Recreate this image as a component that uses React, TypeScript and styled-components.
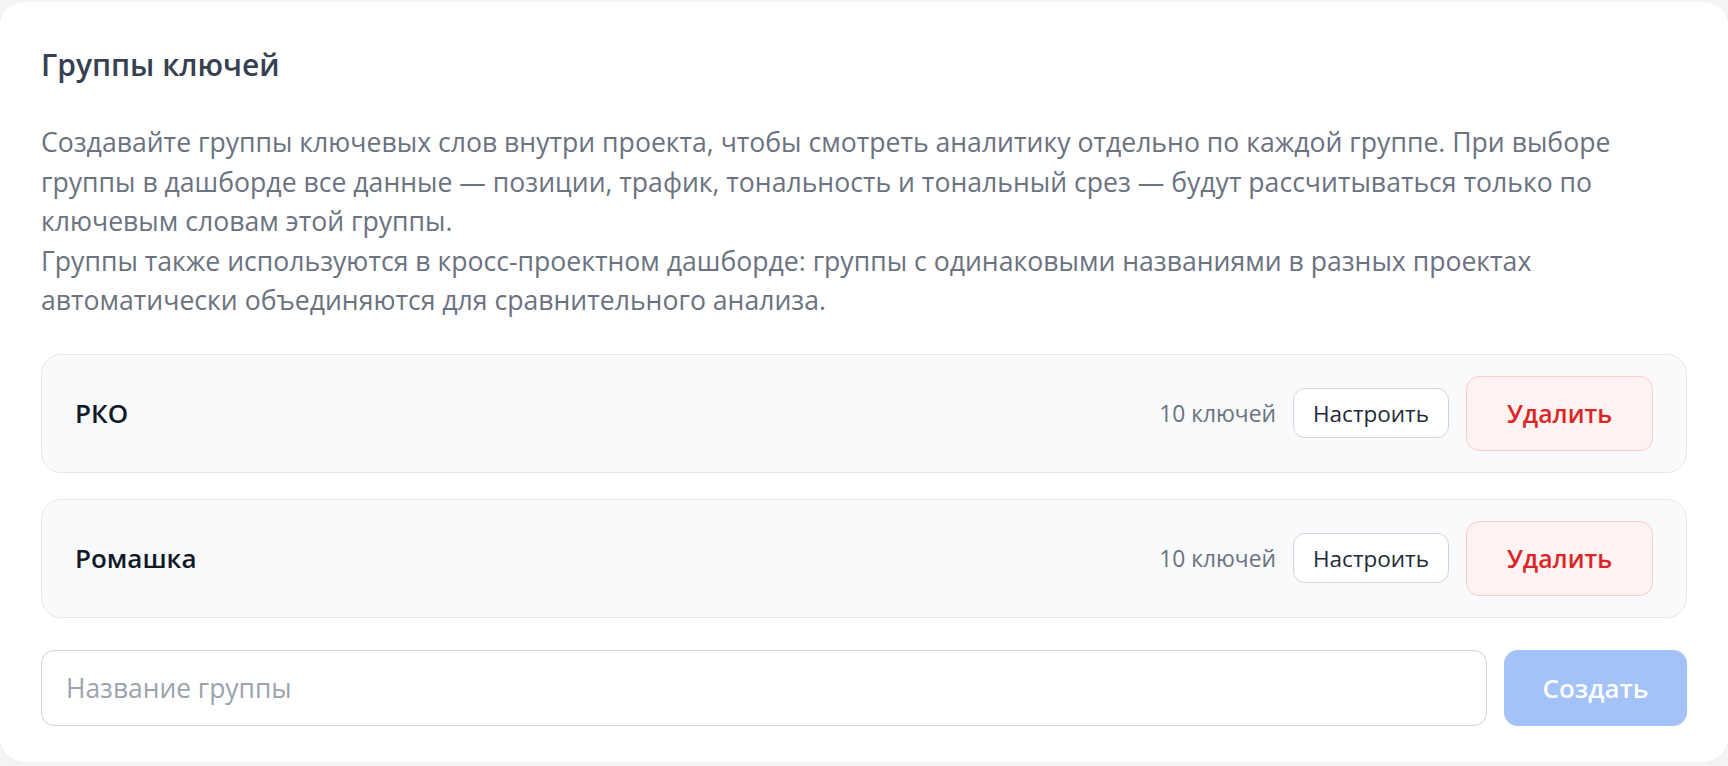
import React from 'react';
import styled, { createGlobalStyle } from 'styled-components';

const GlobalStyle = createGlobalStyle`
  html, body {
    margin: 0;
    padding: 0;
    background: #f3f4f6;
  }
  body {
    font-family: "Open Sans", "Noto Sans", Arial, sans-serif;
  }
  * {
    box-sizing: border-box;
  }
`;

const Page = styled.div`
  padding-top: 2px;
`;

const Card = styled.section`
  background: #ffffff;
  border-radius: 24px;
  padding: 43px 41px 36px 41px;
  box-shadow: 0 1px 2px rgba(0, 0, 0, 0.04);
`;

const Title = styled.h2`
  margin: 0;
  font-size: 30px;
  line-height: 40px;
  font-weight: 600;
  color: #374151;
`;

const Description = styled.p`
  margin: 38px 0 0 0;
  font-size: 26.6px;
  line-height: 39.5px;
  color: #6b7280;
  white-space: nowrap;
`;

const GroupList = styled.div`
  display: flex;
  flex-direction: column;
  gap: 26px;
  margin-top: 33px;
`;

const GroupRow = styled.div`
  display: flex;
  align-items: center;
  justify-content: space-between;
  height: 119px;
  padding: 0 33px;
  background: #f9fafb;
  border: 1px solid #e5e7eb;
  border-radius: 20px;
`;

const GroupName = styled.div`
  font-size: 26px;
  font-weight: 600;
  color: #111827;
`;

const Actions = styled.div`
  display: flex;
  align-items: center;
  gap: 17px;
`;

const KeyCount = styled.span`
  font-size: 22.8px;
  color: #6b7280;
`;

const SetupButton = styled.button`
  height: 50px;
  width: 156px;
  background: #ffffff;
  border: 1.5px solid #d1d5db;
  border-radius: 12px;
  font-family: inherit;
  font-size: 22.5px;
  color: #1f2937;
  cursor: pointer;
`;

const DeleteButton = styled.button`
  height: 75px;
  width: 187px;
  background: #fef2f2;
  border: 1.5px solid #fecaca;
  border-radius: 13px;
  font-family: inherit;
  font-size: 24.8px;
  font-weight: 600;
  color: #dc2626;
  cursor: pointer;
`;

const CreateRow = styled.form`
  display: flex;
  gap: 17px;
  margin-top: 32px;
`;

const NameInput = styled.input`
  flex: 1;
  height: 76px;
  padding: 0 24px;
  border: 1.5px solid #d1d5db;
  border-radius: 13px;
  font-family: inherit;
  font-size: 26.4px;
  color: #111827;
  outline: none;
  &::placeholder {
    color: #9ca3af;
  }
`;

const CreateButton = styled.button<{ $disabled?: boolean }>`
  width: 183px;
  height: 76px;
  border: none;
  border-radius: 14px;
  background: ${(p) => (p.$disabled ? '#a3c2f8' : '#3b82f6')};
  font-family: inherit;
  font-size: 26px;
  font-weight: 600;
  color: #ffffff;
  cursor: ${(p) => (p.$disabled ? 'default' : 'pointer')};
`;

const groups = [
  { id: 1, name: 'РКО', keys: 10 },
  { id: 2, name: 'Ромашка', keys: 10 },
];

const App = () => {
  const [name, setName] = React.useState('');

  return (
    <Page>
      <GlobalStyle />
      <Card>
        <Title>Группы ключей</Title>
        <Description>
          Создавайте группы ключевых слов внутри проекта, чтобы смотреть аналитику отдельно по каждой группе. При выборе
          <br />
          группы в дашборде все данные — позиции, трафик, тональность и тональный срез — будут рассчитываться только по
          <br />
          ключевым словам этой группы.
          <br />
          Группы также используются в кросс-проектном дашборде: группы с одинаковыми названиями в разных проектах
          <br />
          автоматически объединяются для сравнительного анализа.
        </Description>
        <GroupList>
          {groups.map((g) => (
            <GroupRow key={g.id}>
              <GroupName>{g.name}</GroupName>
              <Actions>
                <KeyCount>{g.keys} ключей</KeyCount>
                <SetupButton type="button">Настроить</SetupButton>
                <DeleteButton type="button">Удалить</DeleteButton>
              </Actions>
            </GroupRow>
          ))}
        </GroupList>
        <CreateRow onSubmit={(e) => e.preventDefault()}>
          <NameInput
            placeholder="Название группы"
            value={name}
            onChange={(e) => setName(e.target.value)}
          />
          <CreateButton type="submit" $disabled={!name.trim()}>
            Создать
          </CreateButton>
        </CreateRow>
      </Card>
    </Page>
  );
};

export default App;
